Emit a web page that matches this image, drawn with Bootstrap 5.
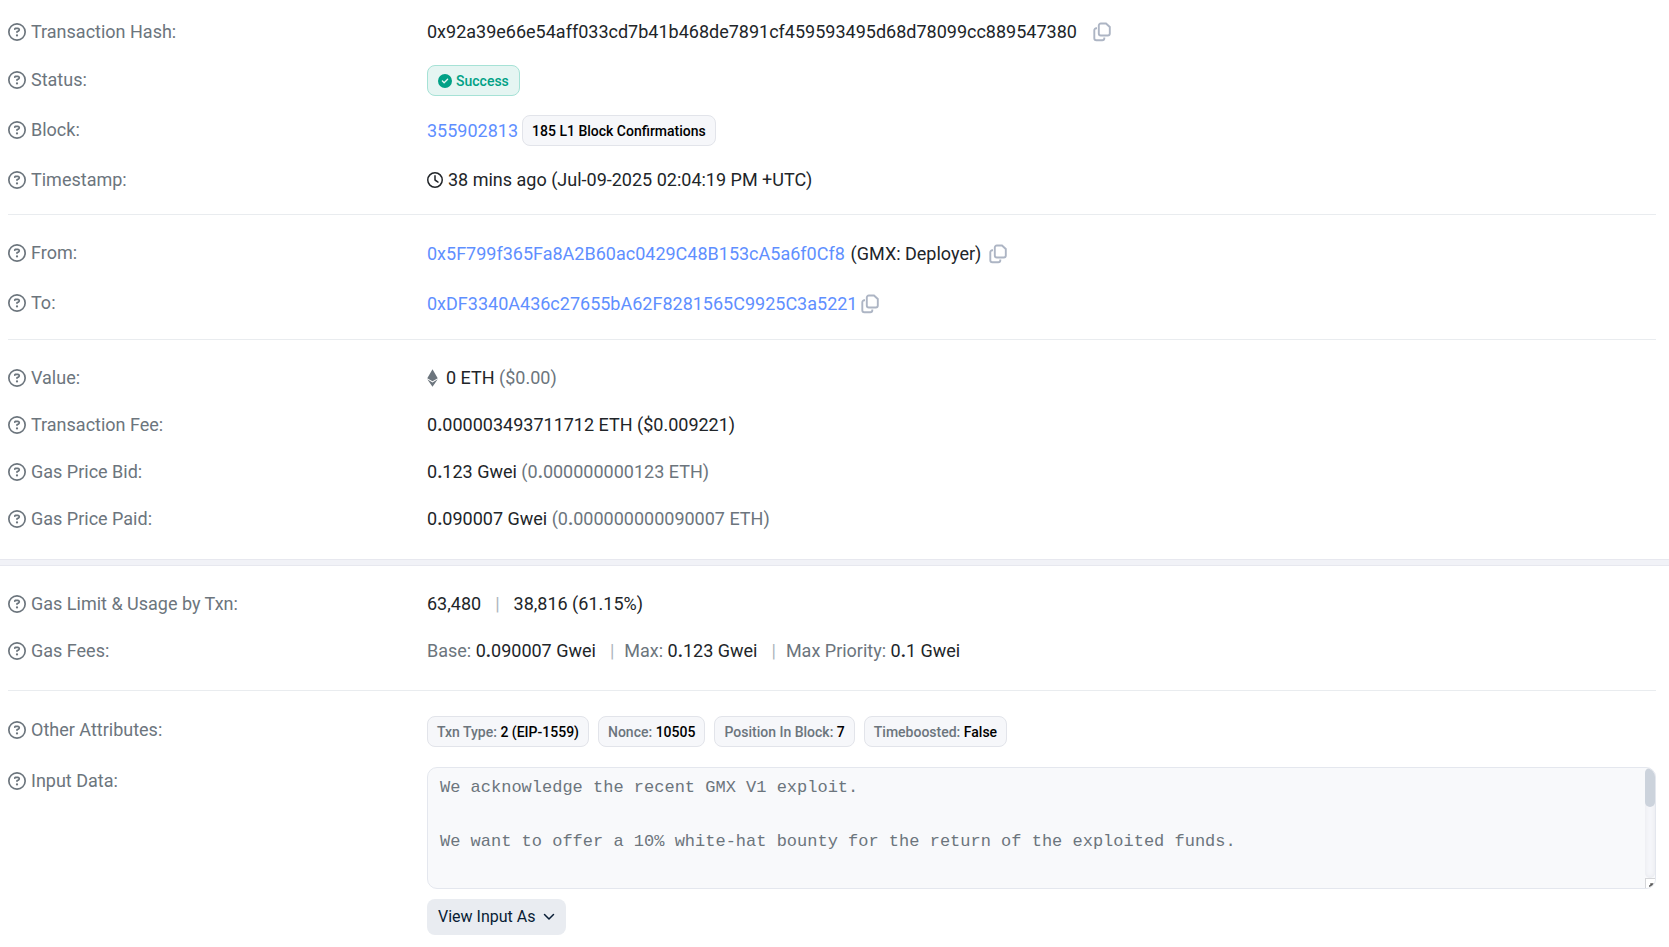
<!DOCTYPE html>
<html lang="en">
<head>
<meta charset="utf-8">
<meta name="viewport" content="width=device-width, initial-scale=1">
<title>Transaction Details</title>
<link rel="stylesheet" href="https://cdn.jsdelivr.net/npm/bootstrap@5.3.0/dist/css/bootstrap.min.css">
<style>
  body { font-family: Roboto, sans-serif; font-size: 18px; line-height: 29px; color: #212529; background: #fff; }
  main { overflow-x: hidden; }
  a { color: #5f8fff; text-decoration: none; }
  .details { padding: 0 13px 0 8px; }
  .details .row { --bs-gutter-x: 28px; }
  .stack { display: flex; flex-direction: column; }
  .stack-wide { gap: 19px; }
  .stack-even { gap: 18px; }
  .first { padding: 17px 0 20px; }
  .second { padding: 23px 0 20px; }
  .third { padding: 23px 0 26px; }
  .fourth { padding: 23px 0 25px; }
  .fifth { padding: 25px 0 12px; gap: 20px; line-height: 27px; }
  .muted { color: #6c757d; }
  .tag-line { min-height: 31px; }
  .rule { margin: 0; border-top: 1px solid #e9ecef; opacity: 1; }
  .band { height: 7px; background: #f1f2f7; border-top: 1px solid #e7e8ef; border-bottom: 1px solid #e7e8ef; }
  .help { width: 18px; height: 18px; margin-right: 5px; fill: #6c757d; flex: none; }
  .tags { gap: 9px; }
  .tag { display: inline-flex; align-items: center; height: 31px; padding: 0 9px; border: 1px solid #e2e4ea; border-radius: 8px; background: #f6f7fa; font-size: 14px; line-height: 20px; font-weight: 500; color: #000; white-space: pre; }
  .tag-ok { padding: 0 10px; color: #00a186; background: #e5f5f2; border-color: #a6e2d6; gap: 4px; }
  .tag-ok svg { width: 14px; height: 14px; fill: currentColor; }
  .copy { display: inline-flex; padding: 0; border: 0; background: none; color: #adb5c4; }
  .copy svg { width: 18px; height: 20px; }
  .clock { width: 16px; height: 16px; margin-right: 5px; fill: currentColor; }
  .pipe { color: #adb5bd; margin: 0 14px; }
  .pipe-fee { margin-right: 10px; }
  .data-wrap { position: relative; overflow: hidden; border: 1px solid #e4e7ee; border-radius: 10px; background: #f8f9fb; }
  .data-box { display: block; width: 100%; height: 120px; padding: 6px 22px 6px 12px; border: 0; background: none; color: #6c757d; font-family: "Liberation Mono", monospace; font-size: 17px; line-height: 27px; resize: none; outline: 0; scrollbar-width: none; }
  .data-box::-webkit-scrollbar { display: none; }
  .track { position: absolute; top: 0; right: 0; bottom: 10px; width: 10px; border-radius: 10px; background: #f6f7fa; box-shadow: inset 0 0 5px #e4e6ec; }
  .thumb { height: 39px; border-radius: 10px; background: #ccd3dc; }
  .grip { position: absolute; right: 0; bottom: 0; width: 10px; height: 10px; border: solid #d5d6d9; border-width: 1px 0 0 1px; background: #fff; }
  .view-btn { height: 36px; margin-top: 10px; padding: 0 11px; border: 0; border-radius: 8px; background: #e9ecf1; color: #081d35; font-size: 16px; line-height: 24px; }
</style>
</head>
<body>
<svg class="d-none" aria-hidden="true">
  <symbol id="help" viewBox="0 0 512 512"><path d="M464 256A208 208 0 1 0 48 256a208 208 0 1 0 416 0zM0 256a256 256 0 1 1 512 0A256 256 0 1 1 0 256zm169.8-90.7c7.9-22.3 29.1-37.3 52.8-37.3h58.3c34.9 0 63.1 28.3 63.1 63.1c0 22.6-12.1 43.5-31.7 54.8L280 264.4c-.2 13-10.9 23.6-24 23.6c-13.3 0-24-10.7-24-24V250.5c0-8.6 4.6-16.5 12.1-20.8l44.3-25.4c4.7-2.7 7.6-7.7 7.6-13.1c0-8.4-6.8-15.1-15.1-15.1H222.6c-3.4 0-6.4 2.1-7.5 5.3l-.4 1.2c-4.4 12.5-18.2 19-30.6 14.6s-19-18.2-14.6-30.6l.4-1.2zM224 352a32 32 0 1 1 64 0 32 32 0 1 1 -64 0z"/></symbol>
  <symbol id="copy" viewBox="0 0 18 20"><path d="M7.800 1.500h5.200l3.800 3.500v6.500a2 2 0 0 1-2 2H7.800a2 2 0 0 1-2-2V3.500a2 2 0 0 1 2-2z M4 6.300H3.300a2 2 0 0 0-2 2v8a2 2 0 0 0 2 2h6a2 2 0 0 0 2-2v-.8" fill="none" stroke="currentColor" stroke-width="1.900"/></symbol>
</svg>
<main>
  <section class="details">
    <div class="stack stack-wide first">
      <div class="row">
        <div class="col-3 muted d-flex align-items-center"><svg class="help"><use href="#help"/></svg>Transaction Hash:</div>
        <div class="col-9 d-flex align-items-center"><span>0x92a39e66e54aff033cd7b41b468de7891cf459593495d68d78099cc889547380</span><button class="copy ms-3" type="button" aria-label="Copy hash"><svg><use href="#copy"/></svg></button></div>
      </div>
      <div class="row align-items-start">
        <div class="col-3 muted d-flex align-items-center"><svg class="help"><use href="#help"/></svg>Status:</div>
        <div class="col-9 d-flex"><span class="tag tag-ok"><svg viewBox="0 0 512 512"><path d="M256 512A256 256 0 1 0 256 0a256 256 0 1 0 0 512zM369 209L241 337c-9.400 9.400-24.600 9.400-33.900 0l-64-64c-9.400-9.400-9.400-24.600 0-33.900s24.600-9.400 33.900 0l47 47L335 175c9.400-9.400 24.600-9.400 33.900 0s9.400 24.600 0 33.900z"/></svg>Success</span></div>
      </div>
      <div class="row align-items-start">
        <div class="col-3 muted d-flex align-items-center"><svg class="help"><use href="#help"/></svg>Block:</div>
        <div class="col-9 d-flex align-items-center"><a href="#block">355902813</a><span class="tag ms-1">185 L1 Block Confirmations</span></div>
      </div>
      <div class="row">
        <div class="col-3 muted d-flex align-items-center"><svg class="help"><use href="#help"/></svg>Timestamp:</div>
        <div class="col-9 d-flex align-items-center"><svg class="clock" viewBox="0 0 512 512"><path d="M464 256A208 208 0 1 1 48 256a208 208 0 1 1 416 0zM0 256a256 256 0 1 0 512 0A256 256 0 1 0 0 256zM232 120V256c0 8 4 15.500 10.700 20l96 64c11 7.400 25.900 4.400 33.300-6.700s4.400-25.900-6.700-33.300L280 243.200V120c0-13.300-10.700-24-24-24s-24 10.700-24 24z"/></svg>38 mins ago (Jul-09-2025 02:04:19 PM +UTC)</div>
      </div>
    </div>
    <hr class="rule">
    <div class="stack stack-wide second">
      <div class="row align-items-start">
        <div class="col-3 muted d-flex align-items-center"><svg class="help"><use href="#help"/></svg>From:</div>
        <div class="col-9 d-flex align-items-center tag-line"><a href="#from">0x5F799f365Fa8A2B60ac0429C48B153cA5a6f0Cf8</a><span class="ms-1 me-2">&#8202;(GMX: Deployer)</span><button class="copy" type="button" aria-label="Copy sender"><svg><use href="#copy"/></svg></button></div>
      </div>
      <div class="row align-items-start">
        <div class="col-3 muted d-flex align-items-center"><svg class="help"><use href="#help"/></svg>To:</div>
        <div class="col-9 d-flex align-items-center tag-line"><a href="#to">0xDF3340A436c27655bA62F8281565C9925C3a5221</a><button class="copy ms-1" type="button" aria-label="Copy recipient"><svg><use href="#copy"/></svg></button></div>
      </div>
    </div>
    <hr class="rule">
    <div class="stack stack-even third">
      <div class="row">
        <div class="col-3 muted d-flex align-items-center"><svg class="help"><use href="#help"/></svg>Value:</div>
        <div class="col-9 d-flex align-items-center"><svg class="me-2" width="11" height="18" viewBox="0 0 320 512" fill="#6c757d"><path d="M311.900 260.800L160 353.600 8 260.800 160 0l151.900 260.800zM160 383.400L8 290.600 160 512l152-221.400-152 92.800z"/></svg><span>0 ETH <span class="muted">($0.00)</span></span></div>
      </div>
      <div class="row">
        <div class="col-3 muted d-flex align-items-center"><svg class="help"><use href="#help"/></svg>Transaction Fee:</div>
        <div class="col-9">0<b>.</b>000003493711712 ETH ($0.009221)</div>
      </div>
      <div class="row">
        <div class="col-3 muted d-flex align-items-center"><svg class="help"><use href="#help"/></svg>Gas Price Bid:</div>
        <div class="col-9">0<b>.</b>123 Gwei <span class="muted">(0<b>.</b>000000000123 ETH)</span></div>
      </div>
      <div class="row">
        <div class="col-3 muted d-flex align-items-center"><svg class="help"><use href="#help"/></svg>Gas Price Paid:</div>
        <div class="col-9">0<b>.</b>090007 Gwei <span class="muted">(0<b>.</b>000000000090007 ETH)</span></div>
      </div>
    </div>
  </section>
  <div class="band"></div>
  <section class="details">
    <div class="stack stack-even fourth">
      <div class="row">
        <div class="col-3 muted d-flex align-items-center"><svg class="help"><use href="#help"/></svg>Gas Limit &amp; Usage by Txn:</div>
        <div class="col-9 d-flex"><span>63,480</span><span class="pipe">|</span><span>38,816 (61.15%)</span></div>
      </div>
      <div class="row">
        <div class="col-3 muted d-flex align-items-center"><svg class="help"><use href="#help"/></svg>Gas Fees:</div>
        <div class="col-9 d-flex"><span><span class="muted">Base:</span> 0<b>.</b>090007 Gwei</span><span class="pipe pipe-fee">|</span><span><span class="muted">Max:</span> 0<b>.</b>123 Gwei</span><span class="pipe pipe-fee">|</span><span><span class="muted">Max Priority:</span> 0<b>.</b>1 Gwei</span></div>
      </div>
    </div>
    <hr class="rule">
    <div class="stack fifth">
      <div class="row align-items-start">
        <div class="col-3 muted d-flex align-items-center"><svg class="help"><use href="#help"/></svg>Other Attributes:</div>
        <div class="col-9 d-flex flex-wrap tags">
          <span class="tag"><span class="muted">Txn Type: </span>2 (EIP-1559)</span>
          <span class="tag"><span class="muted">Nonce: </span>10505</span>
          <span class="tag"><span class="muted">Position In Block: </span>7</span>
          <span class="tag"><span class="muted">Timeboosted: </span>False</span>
        </div>
      </div>
      <div class="row">
        <div class="col-3"><label class="muted d-flex align-items-center" for="inputData"><svg class="help"><use href="#help"/></svg>Input Data:</label></div>
        <div class="col-9">
          <div class="data-wrap">
            <textarea id="inputData" class="data-box" readonly>We acknowledge the recent GMX V1 exploit.

We want to offer a 10% white-hat bounty for the return of the exploited funds.
</textarea>
            <div class="track"><div class="thumb"></div></div>
            <svg class="grip" viewBox="0 0 9 9"><path d="M3 7h2M5 5h2v1h-2zM6 7h1" stroke="#555" stroke-width="1.500" fill="none"/></svg>
          </div>
          <button class="view-btn d-inline-flex align-items-center" type="button">View Input As<svg class="ms-2" width="12" height="12" viewBox="0 0 12 12" fill="none" stroke="currentColor" stroke-width="1.500" stroke-linecap="round" stroke-linejoin="round"><path d="M1.500 3.500L6 8l4.500-4.500"/></svg></button>
        </div>
      </div>
    </div>
  </section>
</main>
<script src="https://cdn.jsdelivr.net/npm/bootstrap@5.3.0/dist/js/bootstrap.bundle.min.js"></script>
</body>
</html>
